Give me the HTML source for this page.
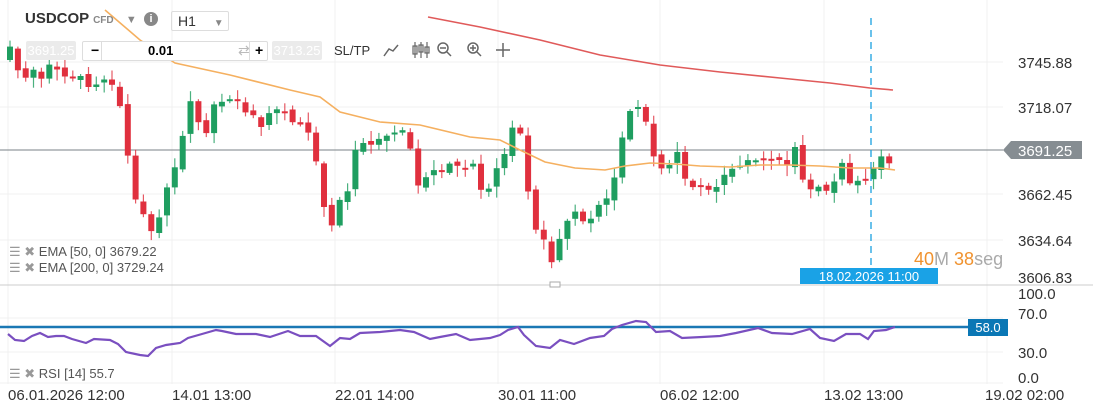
<!DOCTYPE html>
<html><head><meta charset="utf-8"><style>
body{margin:0;width:1093px;height:408px;overflow:hidden;background:#fff;font-family:"Liberation Sans",sans-serif}
svg{position:absolute;left:0;top:0}
.ax{font-size:15px;fill:#333}
.tb{position:absolute;font-size:13px}
</style></head><body>
<svg id="s" width="1093" height="408">
<g stroke="#f0f0f0" stroke-width="1">
<line x1="8" y1="0" x2="8" y2="384"/><line x1="172" y1="0" x2="172" y2="384"/><line x1="335" y1="0" x2="335" y2="384"/><line x1="498" y1="0" x2="498" y2="384"/><line x1="660" y1="0" x2="660" y2="384"/><line x1="824" y1="0" x2="824" y2="384"/><line x1="987" y1="0" x2="987" y2="384"/>
<line x1="0" y1="62" x2="1003" y2="62"/><line x1="0" y1="107" x2="1003" y2="107"/><line x1="0" y1="194" x2="1003" y2="194"/><line x1="0" y1="240" x2="1003" y2="240"/>
<line x1="0" y1="318" x2="1003" y2="318"/><line x1="0" y1="352" x2="1003" y2="352"/><line x1="0" y1="383" x2="1003" y2="383"/>
</g>
<line x1="0" y1="285" x2="1093" y2="285" stroke="#ccc"/>
<line x1="0" y1="150" x2="1003" y2="150" stroke="#7a8287"/>
<g id="c"></g>
<polyline fill="none" stroke="#f5b060" stroke-width="1.6" points="105,10 140,40 175,63 230,75 290,90 320,97 340,112 380,122 420,125 470,137 500,140 520,150 545,162 575,168 605,170 625,166 650,163 675,164 700,166 730,167 760,165 790,165 820,166 850,168 880,168 895,170"/>
<polyline fill="none" stroke="#e05a5a" stroke-width="1.6" points="428,17 480,27 540,40 600,55 660,65 720,72 780,78 830,83 870,88 893,90"/>
<line x1="871" y1="18" x2="871" y2="268" stroke="#1aa0e0" stroke-dasharray="7,5" stroke-width="1.3"/>
<rect x="800" y="268" width="138" height="16" fill="#1aa2e6"/>
<text x="869" y="281" fill="#fff" font-size="13" text-anchor="middle">18.02.2026 11:00</text>
<text x="914" y="265" font-size="18"><tspan fill="#f0922e">40</tspan><tspan fill="#aaa">M </tspan><tspan fill="#f0922e">38</tspan><tspan fill="#aaa">seg</tspan></text>
<polygon points="1003,150 1011,141 1082,141 1082,159 1011,159" fill="#868d92"/>
<text x="1018" y="156" fill="#fff" font-size="15">3691.25</text>
<g class="ax"><text x="1018" y="68">3745.88</text><text x="1018" y="113">3718.07</text><text x="1018" y="200">3662.45</text><text x="1018" y="246">3634.64</text><text x="1018" y="283">3606.83</text>
<text x="1018" y="299">100.0</text><text x="1018" y="319">70.0</text><text x="1018" y="358">30.0</text><text x="1018" y="383">0.0</text>
<text x="8" y="400">06.01.2026 12:00</text><text x="172" y="400">14.01 13:00</text><text x="335" y="400">22.01 14:00</text><text x="498" y="400">30.01 11:00</text><text x="660" y="400">06.02 12:00</text><text x="824" y="400">13.02 13:00</text><text x="985" y="400">19.02 02:00</text></g>
<line x1="0" y1="327" x2="968" y2="327" stroke="#1a78b4" stroke-width="2.5"/>
<rect x="968" y="319" width="40" height="17" fill="#0a77b5"/>
<text x="988" y="332" fill="#fff" font-size="13" text-anchor="middle">58.0</text>
<polyline fill="none" stroke="#7a4fc0" stroke-width="2.2" points="8,334 15,340 24,341 32,336 40,333 48,337 56,336 64,336 72,339 86,343 94,339 110,340 118,344 126,352 140,355 148,356 156,348 166,345 180,343 188,338 202,334 216,330 222,331 236,334 256,334 270,337 288,331 300,336 316,336 330,346 340,338 350,339 360,333 380,332 400,330 414,332 430,339 440,337 456,334 470,340 490,338 500,335 508,330 518,327 524,335 536,346 550,348 560,340 574,344 590,338 604,336 612,329 622,325 636,321 646,322 656,332 670,331 682,338 702,337 720,336 736,333 758,328 772,333 792,334 810,329 820,338 834,341 846,334 860,334 868,339 874,331 886,330 895,327"/>
<rect x="550" y="282" width="10" height="5" fill="#fff" stroke="#aaa"/>
</svg>
<div class="tb" style="left:9px;top:244px;color:#555"><span style="color:#999">☰ ✖</span> EMA [50, 0] 3679.22<br><span style="color:#999">☰ ✖</span> EMA [200, 0] 3729.24</div>
<div class="tb" style="left:9px;top:366px;color:#555"><span style="color:#999">☰ ✖</span> RSI [14] 55.7</div>
<div style="position:absolute;left:25px;top:10px;font-weight:bold;font-size:15px;color:#333">USDCOP <span style="font-size:10px;color:#888;font-weight:bold">CFD</span> <span style="color:#888;font-size:11px;margin-left:8px">▼</span></div>
<div style="position:absolute;left:144px;top:12px;width:14px;height:14px;border-radius:50%;background:#888;color:#fff;font-size:11px;font-weight:bold;text-align:center;line-height:14px">i</div>
<div style="position:absolute;left:171px;top:11px;border:1px solid #ddd;border-radius:2px;font-size:14px;color:#333;line-height:18px;padding-left:6px;box-sizing:border-box;width:58px;height:20px">H1 <span style="color:#888;font-size:10px;margin-left:14px">▼</span></div>
<div style="position:absolute;left:26px;top:41px;width:50px;height:19px;background:#ebebeb;color:#fff;font-size:13px;line-height:19px;text-align:center;border-radius:2px">3691.25</div>
<div style="position:absolute;left:82px;top:41px;width:184px;height:18px;border:1px solid #ddd;border-radius:2px;font-size:14px;background:#fff">
<span style="position:absolute;left:8px;top:0;font-weight:bold">−</span><span style="position:absolute;left:18px;top:0;width:1px;height:18px;background:#ddd"></span>
<span style="position:absolute;left:65px;top:1px;font-weight:bold;font-size:13px">0.01</span><span style="position:absolute;left:155px;top:0;color:#bbb">⇄</span>
<span style="position:absolute;left:166px;top:0;width:1px;height:18px;background:#ddd"></span><span style="position:absolute;left:172px;top:0;font-weight:bold">+</span></div>
<div style="position:absolute;left:272px;top:41px;width:50px;height:19px;background:#ebebeb;color:#fff;font-size:13px;line-height:19px;text-align:center;border-radius:2px">3713.25</div>
<div style="position:absolute;left:334px;top:43px;font-size:13px;color:#333">SL/TP</div>
<svg width="1093" height="70" style="position:absolute;left:0;top:0" fill="none" stroke="#666" stroke-width="1.5">
<polyline points="384,56 389,49 393,51 398,45"/>
<g stroke-width="1.2"><line x1="415" y1="42" x2="415" y2="58"/><rect x="413" y="46" width="4" height="8"/><line x1="421" y1="42" x2="421" y2="58"/><rect x="419" y="45" width="4" height="7"/><line x1="427" y1="42" x2="427" y2="58"/><rect x="425" y="47" width="4" height="6"/></g>
<circle cx="443" cy="48" r="5"/><line x1="447" y1="52" x2="451" y2="56"/><line x1="440" y1="48" x2="446" y2="48"/>
<circle cx="473" cy="48" r="5"/><line x1="477" y1="52" x2="481" y2="56"/><line x1="470" y1="48" x2="476" y2="48"/><line x1="473" y1="45" x2="473" y2="51"/>
<line x1="503" y1="43" x2="503" y2="57"/><line x1="496" y1="50" x2="510" y2="50"/>
</svg>
<script>
(function(){
var kp=[[10,45],[18,70],[26,78],[34,70],[42,75],[50,60],[62,72],[70,80],[78,72],[90,90],[100,75],[110,78],[118,95],[125,130],[130,175],[138,210],[148,225],[156,230],[162,200],[172,170],[180,158],[188,90],[196,125],[206,130],[215,98],[225,100],[235,95],[245,112],[260,125],[272,105],[285,110],[295,125],[305,130],[315,150],[322,195],[330,230],[338,200],[348,190],[356,150],[362,148],[372,140],[380,135],[392,132],[402,128],[410,150],[418,190],[430,165],[440,170],[452,160],[462,175],[472,165],[485,195],[497,165],[506,150],[514,125],[522,140],[528,195],[534,225],[542,228],[550,265],[558,240],[568,222],[576,214],[586,230],[594,205],[604,198],[612,192],[620,150],[628,115],[636,112],[644,108],[652,150],[660,165],[668,170],[676,150],[686,185],[694,192],[702,180],[712,190],[722,178],[734,170],[744,168],[752,160],[760,152],[768,160],[778,160],[786,170],[796,148],[806,200],[814,175],[822,190],[830,193],[842,165],[852,192],[860,182],[870,170],[880,155],[888,168],[895,150]];
var g=document.getElementById('c'),NS='http://www.w3.org/2000/svg';
function ip(x){for(var i=0;i<kp.length-1;i++){if(x<=kp[i+1][0]){var a=kp[i],b=kp[i+1];return a[1]+(b[1]-a[1])*(x-a[0])/(b[0]-a[0]);}}return kp[kp.length-1][1];}
function el(n,a){var e=document.createElementNS(NS,n);for(var k in a)e.setAttribute(k,String(a[k]));g.appendChild(e);}
var prev=ip(10)+15;
for(var i=0;i<113;i++){var x=10+i*7.85;var r=Math.round(x);var c=ip(x)+((r*37)%11-5)*0.8;var o=prev;var up=c<o;var col=up?'#1f9e60':'#e0303e';var t0=Math.min(o,c),b0=Math.max(o,c);if(b0-t0<2)b0=t0+2;var hi=t0-((r*13)%9)-2,lo=b0+((r*7)%10)+2;
el('line',{x1:x.toFixed(1),y1:hi.toFixed(1),x2:x.toFixed(1),y2:lo.toFixed(1),stroke:col,'stroke-width':1.2,opacity:0.8});
el('rect',{x:(x-3).toFixed(1),y:t0.toFixed(1),width:6,height:(b0-t0).toFixed(1),fill:col});
prev=c+((r*5)%3-1)*2;}
})();
</script>
</body></html>
